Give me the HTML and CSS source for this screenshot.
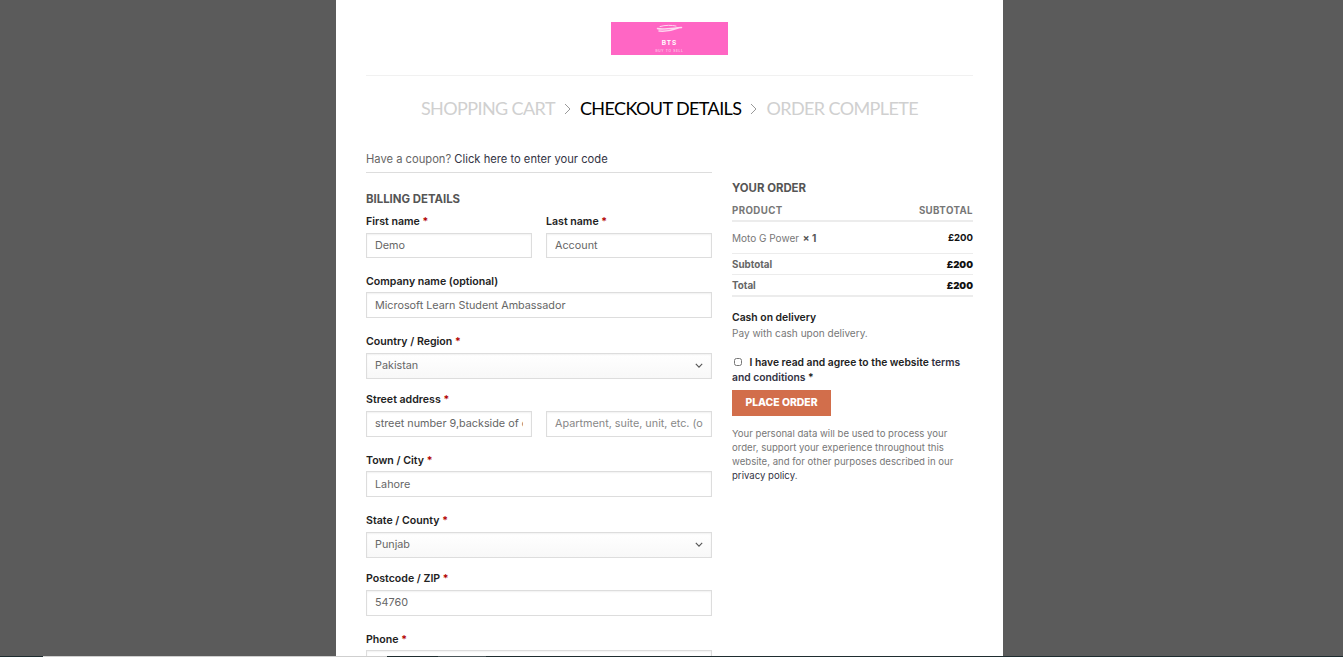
FILE: index.html
```html
<!DOCTYPE html>
<html lang="en">
<head>
    <meta charset="UTF-8">
    <meta name="viewport" content="width=device-width, initial-scale=1.0">
    <title>Checkout</title>
    <link rel="stylesheet" href="styles.css">
</head>
<body>
    <div class="page">
        <header class="site-header">
            <svg class="logo" viewBox="0 0 117 33" width="117" height="33">
                <rect width="117" height="33" fill="#ff66c4"/>
                <g fill="none" stroke="#fdd8f0" stroke-linecap="round">
                    <path d="M49 4.500c5-1.500 12-1.500 16-.5" stroke-width="1"/>
                    <path d="M46.500 6.500c4 1.500 13 0 24-1" stroke-width="1.500"/>
                    <path d="M48 9c6 .5 13-.5 19-3" stroke-width="1.500"/>
                </g>
                <text x="58.5" y="23" class="logo-name">BTS</text>
                <text x="58.5" y="30" class="logo-tag">BUY TO SELL</text>
            </svg>
        </header>
        <nav class="steps">
            <span class="step">SHOPPING CART</span>
            <svg class="step-sep" viewBox="0 0 7 12" width="7" height="12"><path d="M1 1l5 5-5 5" fill="none" stroke="#999" stroke-width="1"/></svg>
            <span class="step step-on">CHECKOUT DETAILS</span>
            <svg class="step-sep" viewBox="0 0 7 12" width="7" height="12"><path d="M1 1l5 5-5 5" fill="none" stroke="#999" stroke-width="1"/></svg>
            <span class="step">ORDER COMPLETE</span>
        </nav>
        <div class="columns">
            <form class="billing">
                <p class="coupon">Have a coupon? <a href="#">Click here to enter your code</a></p>
                <h3 class="section-title">BILLING DETAILS</h3>
                <div class="row row-two row-first">
                    <div>
                        <label>First name <em>*</em></label>
                        <input type="text" value="Demo">
                    </div>
                    <div>
                        <label>Last name <em>*</em></label>
                        <input type="text" value="Account">
                    </div>
                </div>
                <div class="row">
                    <label>Company name (optional)</label>
                    <input class="tall" type="text" value="Microsoft Learn Student Ambassador">
                </div>
                <div class="row">
                    <label>Country / Region <em>*</em></label>
                    <div class="select tall"><span>Pakistan</span><svg viewBox="0 0 10 6" width="8" height="5"><path d="M1 1l4 4 4-4" fill="none" stroke="#555" stroke-width="1.4"/></svg></div>
                </div>
                <div class="row after-select">
                    <label>Street address <em>*</em></label>
                    <div class="row-two">
                        <input class="tall" type="text" value="street number 9,backside of college road">
                        <input class="tall" type="text" placeholder="Apartment, suite, unit, etc. (optional)">
                    </div>
                </div>
                <div class="row">
                    <label>Town / City <em>*</em></label>
                    <input class="tall" type="text" value="Lahore">
                </div>
                <div class="row">
                    <label>State / County <em>*</em></label>
                    <div class="select tall"><span>Punjab</span><svg viewBox="0 0 10 6" width="8" height="5"><path d="M1 1l4 4 4-4" fill="none" stroke="#555" stroke-width="1.4"/></svg></div>
                </div>
                <div class="row after-select">
                    <label>Postcode / ZIP <em>*</em></label>
                    <input class="tall" type="text" value="54760">
                </div>
                <div class="row">
                    <label>Phone <em>*</em></label>
                    <input class="tall" type="text">
                </div>
            </form>
            <aside class="order">
                <h3 class="section-title">YOUR ORDER</h3>
                <div class="order-row order-head"><span>PRODUCT</span><span>SUBTOTAL</span></div>
                <div class="order-row order-item"><span>Moto G Power <b>&times;&nbsp;1</b></span><strong>£200</strong></div>
                <div class="order-row order-sub"><span>Subtotal</span><strong>£200</strong></div>
                <div class="order-row order-total"><span>Total</span><strong>£200</strong></div>
                <p class="pay-title">Cash on delivery</p>
                <p class="pay-text">Pay with cash upon delivery.</p>
                <label class="terms"><input type="checkbox"> I have read and agree to the website <a href="#">terms</a> <a href="#">and conditions</a> *</label>
                <button type="button" class="place-order">PLACE ORDER</button>
                <p class="privacy">Your personal data will be used to process your order, support your experience throughout this website, and for other purposes described in our <a href="#">privacy policy</a>.</p>
            </aside>
        </div>
    </div>
    <div class="edge-strip">
        <span class="edge-dark edge-a"></span>
        <span class="edge-light"></span>
        <span class="edge-dark edge-b"></span>
        <span class="edge-mid"></span>
        <span class="edge-dark edge-c"></span>
    </div>
</body>
</html>
```

FILE: styles.css
```css
html, body {
    height: 100%;
    overflow: hidden;
}
body {
    box-sizing: border-box;
    margin: 0;
    padding-right: 4px; /* page sits 2px left of centre */
    background: #5b5b5b;
    font-family: "Inter", "Liberation Sans", sans-serif;
    font-size: 11px;
    color: #777;
}
.page {
    width: 607px;
    height: 100%;
    margin: 0 auto;
    padding: 0 30px;
    background: #fff;
    overflow: hidden;
}
.site-header {
    display: flex;
    justify-content: center;
    padding: 22px 0 20px;
    border-bottom: 1px solid #f1f1f1;
}
.logo {
    display: block;
}
.logo-name {
    font-size: 6.5px;
    font-weight: 700;
    fill: #fff;
    text-anchor: middle;
    letter-spacing: 1px;
}
.logo-tag {
    font-size: 3.2px;
    fill: #fde3f4;
    text-anchor: middle;
    letter-spacing: 0.7px;
}
.steps {
    display: flex;
    justify-content: center;
    align-items: center;
    gap: 8px;
    height: 64px;
    font-family: "Lato", sans-serif;
    font-size: 18px;
    letter-spacing: -0.6px;
}
.step {
    color: #d0d0d0;
}
.step-on {
    color: #000;
}
.step-sep {
    display: block;
    margin: 1px 1px 0;
}
.columns {
    display: grid;
    grid-template-columns: 346px 241px;
    gap: 20px;
    margin-top: 9px;
}
.coupon {
    margin: 0;
    padding: 1px 0 4px;
    border-bottom: 1px solid #ddd;
    line-height: 18px;
    font-size: 11.2px;
    color: #666;
}
a {
    color: #334;
    text-decoration: none;
}
.section-title {
    margin: 0;
    color: #555;
    font-size: 11.4px;
    font-weight: 700;
    line-height: 16px;
}
.billing .section-title {
    margin-top: 18px;
}
.row {
    margin-top: 16.1px;
}
.row.after-select {
    margin-top: 13.5px;
}
.row.row-first {
    margin-top: 7px;
}
.row-two {
    display: grid;
    grid-template-columns: 166px 166px;
    gap: 14px;
}
label {
    display: block;
    margin-bottom: 3.5px;
    color: #222;
    font-size: 10.6px;
    font-weight: 600;
    line-height: 15px;
}
label em {
    color: #b20000;
    font-style: normal;
}
input[type="text"], .select {
    display: block;
    box-sizing: border-box;
    width: 100%;
    height: 25px;
    padding: 0 8px;
    border: 1px solid #ddd;
    box-shadow: inset 0 1px 2px rgba(0,0,0,0.06);
    font-family: inherit;
    font-size: 10.8px;
    color: #666;
    background: #fff;
    outline: 0;
}
input.tall, .select.tall {
    height: 26px;
}
input::placeholder {
    color: #888;
}
.select {
    display: flex;
    align-items: center;
    justify-content: space-between;
    background: linear-gradient(#fff, #f8f8f8);
}
.order .section-title {
    margin-top: 31px;
}
.order-row {
    display: flex;
    justify-content: space-between;
    align-items: center;
    border-bottom: 1px solid #ececec;
}
.order-head {
    height: 20px;
    border-bottom-width: 2px;
    margin-top: 4px;
    font-size: 9.7px;
    font-weight: 700;
    letter-spacing: 0.4px;
    color: #777;
}
.order-item {
    height: 31px;
    font-size: 10px;
}
.order-item b {
    margin-left: 1px;
    color: #555;
}
.order-row strong {
    color: #111;
    font-size: 9.6px;
}
.order-sub, .order-total {
    height: 20px;
    font-size: 9.8px;
    font-weight: 700;
    color: #666;
}
.order-total {
    border-bottom-width: 2px;
}
.pay-title {
    margin: 13px 0 0;
    color: #222;
    font-size: 10.4px;
    font-weight: 600;
    line-height: 15px;
}
.pay-text {
    margin: 0;
    font-size: 10.05px;
    line-height: 16px;
    color: #777;
}
.terms {
    margin: 14px 0 0;
    line-height: 15px;
    font-size: 10.3px;
}
.terms input {
    width: 8px;
    height: 8px;
    margin: 0 5px 0 2px;
    vertical-align: 0;
}
.terms a {
    color: #334;
}
.place-order {
    display: block;
    width: 99px;
    height: 26px;
    margin-top: 5px;
    padding: 0 0 2px;
    border: 0;
    background: #d26e4b;
    color: #fff;
    font-family: inherit;
    font-size: 10.4px;
    font-weight: 800;
}
.privacy {
    margin: 11px 0 0;
    font-size: 9.6px;
    line-height: 14px;
    color: #777;
}
.privacy a {
    color: #334;
}
/* 1px strip along the very bottom of the window */
.edge-strip {
    position: fixed;
    left: 0;
    right: 0;
    bottom: 0;
    display: flex;
    height: 1px;
}
.edge-dark {
    background: #1f2d30;
}
.edge-a {
    width: 43px;
}
.edge-light {
    width: 344px;
    background: #cfcfcf;
}
.edge-b {
    width: 51px;
}
.edge-mid {
    width: 48px;
    background: #4a5558;
}
.edge-c {
    flex: 1;
}
```
